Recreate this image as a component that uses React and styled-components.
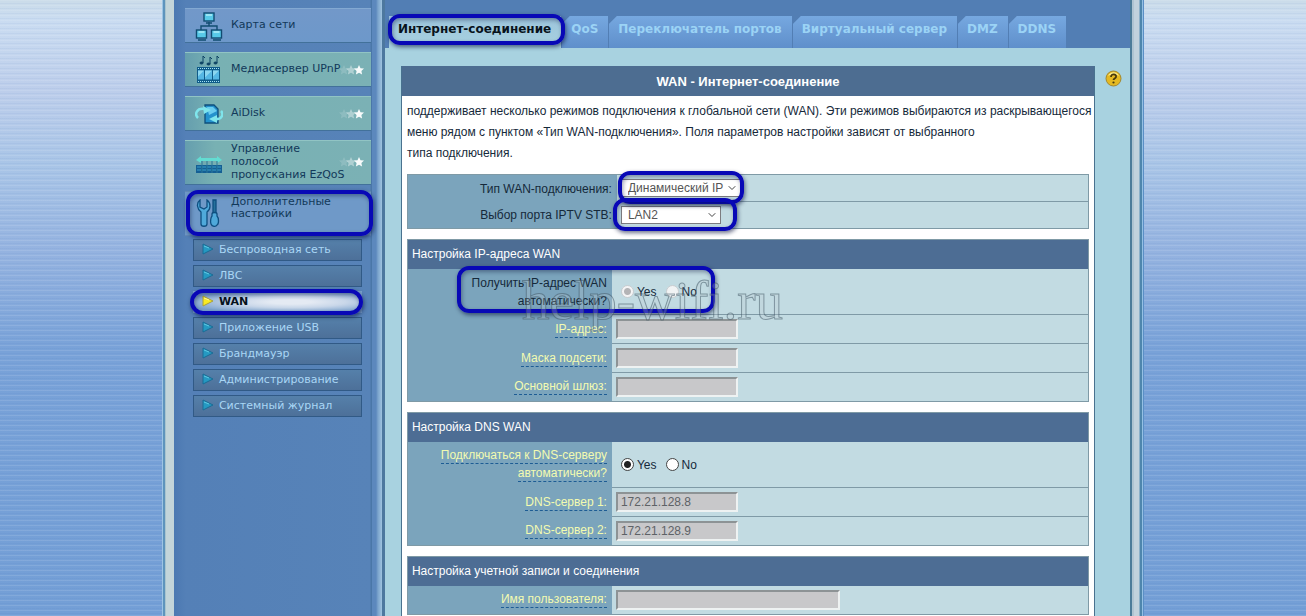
import React from "react";
import styled, { createGlobalStyle, css } from "styled-components";
import { ChevronDown } from "lucide-react";

const GlobalStyle = createGlobalStyle`
  * {
    box-sizing: border-box;
  }
  body {
    margin: 0;
    overflow: hidden;
    font-family: "Liberation Sans", Arial, sans-serif;
    font-size: 12px;
    color: #15293a;
    background:
      repeating-linear-gradient(rgba(255, 255, 255, 0.1) 0 1px, transparent 1px 3px, rgba(40, 90, 170, 0.05) 3px 4px, transparent 4px 5px),
      linear-gradient(#cbdce9 0, #cadcf1 20px, #bdceeb 90px, #a9c5e7 165px, #95b3e0 250px, #79a2d8 350px, #749fd6 100%);
  }
  p, h1, h2 {
    margin: 0;
  }
`;

const Page = styled.div`
  display: flex;
  width: 75.2%;
  min-width: 980px;
  height: 100vh;
  margin: 0 auto;
`;
const Rail = styled.div`
  flex: none;
  width: ${props => (props.$right ? "14px" : "12px")};
  background: ${props =>
    props.$right
      ? "linear-gradient(90deg, #4d7c99 0 2px, #afc4d1 2px 4px, #c2d2dc 4px 9px, #8db1c9 9px 10px, #4e86ad 10px 12px, #94c0e4 12px 13px, #5b8fc5 13px)"
      : "linear-gradient(90deg, #9cc4e4 0 1px, #5e94bd 1px 3px, #a8c4cf 3px 4px, #c3d5da 4px)"};
`;
const Ring = styled.span`
  position: absolute;
  z-index: 2;
  inset: ${props => props.$inset};
  border: 4px solid #0808b6;
  border-radius: ${props => props.$radius || "12px"};
  box-shadow: 1px 2px 4px rgba(10, 20, 60, 0.6), inset 1px 2px 4px rgba(10, 20, 60, 0.4);
  pointer-events: none;
`;

const Sidebar = styled.nav`
  flex: none;
  width: 211px;
  padding: 8px 11px 0 11px;
  font-family: "DejaVu Sans", Verdana, sans-serif;
  font-size: 11px;
  border-right: 3px solid #4d789f;
  background: linear-gradient(90deg, #4c79b2 0, #5480b7 12px, #5783b8 196px, #4a77a8 197px 198px, #5c88bd 198px 202px, #7ca5cd 204px, #9fc3df 208px);
`;
const MenuItem = styled.a`
  position: relative;
  display: flex;
  align-items: center;
  height: ${props => (props.$tall ? "45px" : "35px")};
  margin-bottom: ${props => (props.$tall ? "6px" : "9px")};
  padding-left: 10px;
  line-height: 13px;
  color: #12395a;
  text-decoration: none;
  background: ${props => (props.$green ? "linear-gradient(90deg, #659eae, #78b1b3 30px, #7bb1b5)" : "linear-gradient(#7298c9, #6d98ca)")};
  border-top: 1px solid ${props => (props.$green ? "#91c4c4" : "#83a9d2")};
  border-bottom: 1px solid #42719a;
  svg {
    flex: none;
  }
  ${props =>
    props.$current &&
    css`
      margin-bottom: 3px;
      line-height: 12px;
      background: #6f99c8;
      border-color: #6389b5;
    `}
`;
const MenuText = styled.span`
  width: 120px;
  margin-left: 8px;
  white-space: pre-line;
  padding-bottom: ${props => (props.$raised ? "12px" : "2px")};
`;
const Stars = styled.svg`
  position: absolute;
  right: 6px;
  bottom: ${props => (props.$tall ? "16px" : "10px")};
`;
const SubMenu = styled.div`
  display: grid;
  gap: 4px;
  padding: 0 9px 0 8px;
`;
const SubItem = styled.a`
  position: relative;
  display: flex;
  align-items: center;
  gap: 5px;
  height: 22px;
  padding: 0 0 2px 8px;
  color: #a9d6f5;
  text-decoration: none;
  background: linear-gradient(#5580aa, #4d7099);
  border: 1px solid #315a86;
  ${props =>
    props.$current &&
    css`
      font-weight: bold;
      color: #06121c;
      background: radial-gradient(ellipse at 58% 50%, #e4eaf3 15%, #c9d7e9 40%, #79a1cd 80%);
      border-color: transparent;
    `}
`;

const Main = styled.main`
  flex: 1;
  display: flex;
  flex-direction: column;
  min-width: 0;
  background: #a8d2e0;
`;
const Tabs = styled.nav`
  flex: none;
  display: flex;
  align-items: flex-end;
  gap: 1px;
  height: 48px;
  padding-left: 4px;
  font-family: "DejaVu Sans", Verdana, sans-serif;
  font-weight: bold;
  font-size: 12px;
  background: #527eb4;
`;
const Tab = styled.a`
  position: relative;
  height: 32px;
  padding: 0 10px 0 9px;
  line-height: 27px;
  white-space: nowrap;
  color: #9bd3f5;
  text-decoration: none;
  background: linear-gradient(135deg, #527eb4 5px, transparent 6px), linear-gradient(#76a8e0, #5f8fcb);
  ${props =>
    props.$current &&
    css`
      color: #08131c;
      background: linear-gradient(#9cc4dc, #a8d2e0);
    `}
`;
const Body = styled.div`
  flex: 1;
  display: flex;
  gap: 10px;
  padding: 18px 8px 0 16px;
`;
const Card = styled.section`
  flex: 1;
  min-width: 0;
  background: #fff;
  border: solid #49728f;
  border-width: 0 1px;
`;
const CardTitle = styled.h1`
  height: 30px;
  line-height: 31px;
  text-align: center;
  font-size: 13px;
  color: #fff;
  background: #4d6d91;
`;
const Intro = styled.p`
  padding: 5px 0 10px 5px;
  line-height: 21px;
  font-size: 12px;
  white-space: pre;
`;
const HelpButton = styled.button`
  width: 17px;
  height: 17px;
  margin-top: 4px;
  padding: 0;
  border: 0;
  background: none;
`;

const Row = styled.div`
  position: relative;
  display: grid;
  grid-template-columns: ${props => (props.$wide ? "209px" : "204px")} 1fr;
  height: ${props => props.$height || "29px"};
  background: #7ba4bc;
`;
const Group = styled.section`
  margin: 0 5px 10px;
  border: solid #7f9aa6;
  border-width: 1px 1px 0;
  h2 {
    height: 29px;
    padding-left: 4px;
    line-height: 29px;
    font-size: 12px;
    font-weight: normal;
    color: #fff;
    background: #4d6d94;
  }
  > ${Row}:last-child {
    border-bottom: 1px solid #7f9aa6;
  }
`;
const LabelCell = styled.div`
  display: flex;
  align-items: center;
  justify-content: flex-end;
  padding-right: 5px;
  text-align: right;
  line-height: 18px;
`;
const ValueCell = styled.div`
  position: relative;
  display: flex;
  align-items: center;
  gap: 9px;
  padding-left: ${props => props.$pad || "4px"};
  background: #c2dbe2;
  border-bottom: 1px solid #7f9aa6;
  ${Row}:last-child > & {
    border-bottom: 0;
  }
`;
const Label = styled.label`
  white-space: pre-line;
`;
const HintLink = styled.a`
  display: flex;
  flex-direction: column;
  align-items: flex-end;
  color: #f3fbb0;
  text-decoration: none;
  span {
    line-height: 15px;
    border-bottom: 1px dashed #1d5c94;
  }
  span + span {
    margin-top: 2px;
  }
`;
const TextInput = styled.input`
  width: ${props => (props.$long ? "224px" : "122px")};
  height: 20px;
  padding: 0 3px;
  font: 12px "Liberation Sans", Arial, sans-serif;
  color: #5d6266;
  background: #c8c8ca;
  border: 2px solid;
  border-color: #8d9395 #eef2f2 #eef2f2 #8d9395;
`;
const SelectBox = styled.span`
  position: relative;
  width: ${props => (props.$short ? "100px" : "120px")};
  height: 18px;
  select {
    appearance: none;
    width: 100%;
    height: 18px;
    padding: 0 6px;
    font: 12px "Liberation Sans", Arial, sans-serif;
    color: #555;
    background: #fff;
    border: 1px solid #7c7c80;
    border-radius: 0;
  }
  svg {
    position: absolute;
    right: 3px;
    top: 3px;
    pointer-events: none;
  }
`;
const RadioLabel = styled.label`
  display: flex;
  align-items: center;
  gap: 3px;
  input {
    appearance: none;
    width: 13px;
    height: 13px;
    margin: 0;
    border: 1px solid #444;
    border-radius: 50%;
    background: #fff;
  }
  input:checked {
    background: radial-gradient(circle, #222 0 3px, #fff 4px);
  }
  input:disabled {
    border-color: #c9cdd0;
    background: #f1f3f4;
  }
  input:disabled:checked {
    background: radial-gradient(circle, #b4b4b6 0 3px, #f4f4f5 4px);
  }
`;
const Watermark = styled.span`
  position: absolute;
  z-index: 3;
  left: 114px;
  top: 0;
  line-height: 64px;
  font-family: "Liberation Serif", serif;
  font-size: 55px;
  color: rgba(190, 205, 212, 0.25);
  -webkit-text-stroke: 1px rgba(60, 82, 95, 0.5);
  pointer-events: none;
`;

const NetworkIcon = () => (
  <svg width="28" height="30" viewBox="0 0 28 30" fill="#58c9e8" stroke="#114c72" strokeWidth="1.4">
    <path d="M14 11v4M6 19v-4h16v4" fill="none" />
    <rect x="9" y="2" width="10" height="8" />
    <rect x="1.500" y="19" width="10" height="8" />
    <rect x="16.500" y="19" width="10" height="8" />
    <path d="M11 12h6M3 29h8M18 29h8" />
    <path d="M11 4h6M3.500 21h6M18.500 21h6" stroke="#b0edf8" />
  </svg>
);
const MediaIcon = () => (
  <svg width="28" height="30" viewBox="0 0 28 30">
    <g fill="#0d4264" stroke="#0d4264">
      <path d="M8 8V1l2 2M15 9V2l2 2M22 8V1l2 2" fill="none" />
      <ellipse cx="6.500" cy="8" rx="1.600" ry="1" />
      <ellipse cx="13.500" cy="9" rx="1.600" ry="1" />
      <ellipse cx="20.500" cy="8" rx="1.600" ry="1" />
    </g>
    <rect x="2" y="12" width="23" height="16" fill="#0f5b8a" />
    <path d="M3 13.500h21M3 26.500h21" stroke="#a5e4f4" strokeDasharray="1 1" />
    <path d="M3 15.500h6v9H3zM10 15.500h7v9h-7zM18 15.500h6v9h-6z" fill="#56b7e4" />
    <path d="M3 15.500h6l-6 6zM10 15.500h7l-7 7zM18 15.500h6l-6 6z" fill="#8cd6f0" />
  </svg>
);
const DiskIcon = () => (
  <svg width="28" height="28" viewBox="0 0 28 28">
    <path d="M10 5h9l4 4v14H10z" fill="#2492cd" stroke="#0e4f7c" strokeWidth="1.300" />
    <path d="M12 7h6l4 4-8 4z" fill="#6bcdf0" />
    <path d="M9 9C2 8-1 14 3 18" fill="none" stroke="#7fe5ec" strokeWidth="2.500" />
    <path d="M8 6l8 4-7 4z" fill="#7fe5ec" />
    <path d="M20 19c7 1 9-5 6-8" fill="none" stroke="#7fe5ec" strokeWidth="2.500" />
    <path d="M22 15l-8 4 8 4z" fill="#7fe5ec" />
  </svg>
);
const BandwidthIcon = () => (
  <svg width="28" height="28" viewBox="0 0 28 28">
    <path d="M1 11l5-4v2h16V7l5 4-5 3v-2H6v2z" fill="#63dcd2" />
    <path d="M1 16h26v8H1z" fill="#145f94" />
    <path d="M2 18h24M2 21h24" stroke="#3a9fca" strokeDasharray="4 1" />
    <path d="M7 12v12M12 12v12M17 12v12M22 12v12" stroke="#2a7898" />
  </svg>
);
const ToolsIcon = () => (
  <svg width="28" height="30" viewBox="0 0 28 30" stroke="#0f4f80" strokeWidth="1.300" fill="#4fa9da">
    <path d="M5 1C1 4 2 10 6 13v12c0 3 6 3 6 0V13c4-3 4-9 0-12v7l-3 2-4-2z" />
    <path d="M18 1h3v13h-3z" fill="#25719c" />
    <path d="M17 15c0-2 5-2 5 0v2c2 2 2 8 0 9-1 2-5 2-6-1s0-7 1-8z" />
  </svg>
);
const HelpIcon = () => (
  <svg width="17" height="17" viewBox="0 0 17 17">
    <circle cx="8.500" cy="8.500" r="7.500" fill="#e5b922" stroke="#a28831" />
    <path d="M3 6c2-5 9-5 11 0-3-2-8-2-11 0z" fill="#fbeb8a" />
    <path d="M6 7c0-4 6-3 5 0 0 1-2.500 1.500-2.500 3" fill="none" stroke="#493a0c" strokeWidth="1.800" />
    <circle cx="8.500" cy="12.500" r="1.100" fill="#493a0c" />
  </svg>
);
const Arrow = ({ active }) => (
  <svg width="12" height="12" viewBox="0 0 12 12">
    <path d="M1 1l10 5-10 5z" fill={active ? "#f8ea22" : "#2599c2"} stroke={active ? "#aaa13b" : "#1a6c95"} />
    <path d="M2 3l5 2" stroke={active ? "#fffba0" : "#5fc9e3"} />
  </svg>
);
const star = "M0-5l1.500 3.200 3.500.400-2.600 2.400.700 3.500L0 2.800l-3.100 1.700.700-3.500L-5-1.400l3.500-.400z";
const FadingStars = ({ tall }) => (
  <Stars $tall={tall} width="26" height="12" viewBox="0 0 26 12" fill="#fff">
    <path d={star} transform="translate(5 6)" opacity="0.15" />
    <path d={star} transform="translate(12 6)" opacity="0.4" />
    <path d={star} transform="translate(20 6)" opacity="0.95" />
  </Stars>
);

const menu = [
  { text: "Карта сети", Icon: NetworkIcon },
  { text: "Медиасервер UPnP", Icon: MediaIcon, green: true },
  { text: "AiDisk", Icon: DiskIcon, green: true },
  { text: "Управление\nполосой\nпропускания EzQoS", Icon: BandwidthIcon, green: true, tall: true },
  { text: "Дополнительные\nнастройки", Icon: ToolsIcon, tall: true, current: true },
];
const subMenu = ["Беспроводная сеть", "ЛВС", "WAN", "Приложение USB", "Брандмауэр", "Администрирование", "Системный журнал"];
const tabs = ["Интернет-соединение", "QoS", "Переключатель портов", "Виртуальный сервер", "DMZ", "DDNS"];

const InputRow = ({ id, label, value = "", long }) => (
  <Row>
    <LabelCell>
      <HintLink href={`#${id}`}>
        <span id={`${id}-label`}>{label}</span>
      </HintLink>
    </LabelCell>
    <ValueCell>
      <TextInput id={id} aria-labelledby={`${id}-label`} defaultValue={value} $long={long} disabled />
    </ValueCell>
  </Row>
);

const YesNo = ({ name, labelledBy, disabled }) => (
  <ValueCell $pad="9px" role="radiogroup" aria-labelledby={labelledBy}>
    <RadioLabel>
      <input type="radio" name={name} defaultChecked disabled={disabled} />
      Yes
    </RadioLabel>
    <RadioLabel>
      <input type="radio" name={name} disabled={disabled} />
      No
    </RadioLabel>
  </ValueCell>
);

const SelectRow = ({ id, label, value, short, ring }) => (
  <Row $wide $height="27px">
    <LabelCell>
      <Label htmlFor={id}>{label}</Label>
    </LabelCell>
    <ValueCell>
      <SelectBox $short={short}>
        <select id={id}>
          <option>{value}</option>
        </select>
        <ChevronDown size={12} color="#444" />
        <Ring $inset={ring} />
      </SelectBox>
    </ValueCell>
  </Row>
);

const App = () => (
  <>
    <GlobalStyle />
    <Page>
      <Rail />
      <Sidebar>
        {menu.map(({ text, Icon, green, tall, current }) => (
          <MenuItem key={text} href="#" $green={green} $tall={tall} $current={current}>
            <Icon />
            <MenuText $raised={current}>{text}</MenuText>
            {green && <FadingStars tall={tall} />}
            {current && <Ring $inset="-2px -2px -1px 1px" />}
          </MenuItem>
        ))}
        <SubMenu>
          {subMenu.map(text => (
            <SubItem key={text} href="#" $current={text === "WAN"}>
              <Arrow active={text === "WAN"} />
              {text}
              {text === "WAN" && <Ring $inset="-3px -2px -3px -4px" $radius="14px" />}
            </SubItem>
          ))}
        </SubMenu>
      </Sidebar>
      <Main>
        <Tabs>
          {tabs.map((text, i) => (
            <Tab key={text} href="#" $current={i === 0}>
              {text}
              {i === 0 && <Ring $inset="-2px -4px 3px -1px" />}
            </Tab>
          ))}
        </Tabs>
        <Body>
          <Card>
            <CardTitle>WAN - Интернет-соединение</CardTitle>
            <Intro>
              {"поддерживает несколько режимов подключения к глобальной сети (WAN). Эти режимов выбираются из раскрывающегося\nменю рядом с пунктом «Тип WAN-подключения». Поля параметров настройки зависят от выбранного\nтипа подключения."}
            </Intro>
            <Group>
              <SelectRow id="wan-type" label="Тип WAN-подключения:" value="Динамический IP" ring="-8px -3px -7px -3px" />
              <SelectRow id="iptv-port" label="Выбор порта IPTV STB:" value="LAN2" short ring="-8px -16px -7px -8px" />
            </Group>
            <Group>
              <h2>Настройка IP-адреса WAN</h2>
              <Row $height="46px">
                <LabelCell>
                  <Label as="span" id="wan-auto">
                    {"Получить IP-адрес WAN\nавтоматически?"}
                  </Label>
                </LabelCell>
                <YesNo name="wan-auto" labelledBy="wan-auto" disabled />
                <Ring $inset="-3px 373px 2px 49px" />
                <Watermark>help-wifi.ru</Watermark>
              </Row>
              <InputRow id="ip" label="IP-адрес:" />
              <InputRow id="mask" label="Маска подсети:" />
              <InputRow id="gateway" label="Основной шлюз:" />
            </Group>
            <Group>
              <h2>Настройка DNS WAN</h2>
              <Row $height="46px">
                <LabelCell>
                  <HintLink href="#dns-auto" id="dns-auto">
                    <span>Подключаться к DNS-серверу</span>
                    <span>автоматически?</span>
                  </HintLink>
                </LabelCell>
                <YesNo name="dns-auto" labelledBy="dns-auto" />
              </Row>
              <InputRow id="dns1" label="DNS-сервер 1:" value="172.21.128.8" />
              <InputRow id="dns2" label="DNS-сервер 2:" value="172.21.128.9" />
            </Group>
            <Group>
              <h2>Настройка учетной записи и соединения</h2>
              <InputRow id="user" label="Имя пользователя:" long />
            </Group>
          </Card>
          <HelpButton aria-label="Справка">
            <HelpIcon />
          </HelpButton>
        </Body>
      </Main>
      <Rail $right />
    </Page>
  </>
);

export default App;
